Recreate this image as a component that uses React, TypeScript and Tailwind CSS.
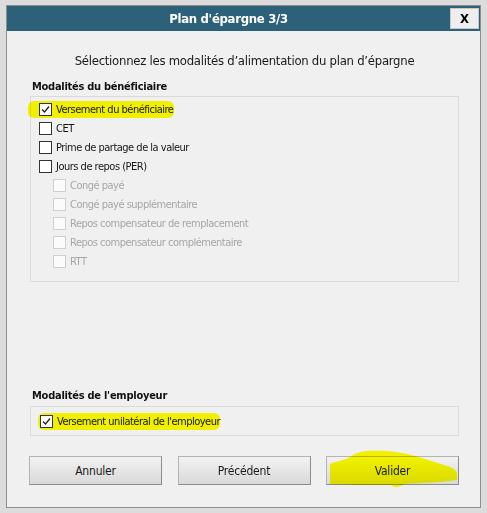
import React from 'react';

type Item = { label: string; checked?: boolean; disabled?: boolean; sub?: boolean; highlight?: boolean };

const beneficiaire: Item[] = [
  { label: 'Versement du bénéficiaire', checked: true, highlight: true },
  { label: 'CET' },
  { label: 'Prime de partage de la valeur' },
  { label: 'Jours de repos (PER)' },
  { label: 'Congé payé', disabled: true, sub: true },
  { label: 'Congé payé supplémentaire', disabled: true, sub: true },
  { label: 'Repos compensateur de remplacement', disabled: true, sub: true },
  { label: 'Repos compensateur complémentaire', disabled: true, sub: true },
  { label: 'RTT', disabled: true, sub: true },
];

const Box: React.FC<{ checked?: boolean; disabled?: boolean }> = ({ checked, disabled }) => (
  <span
    className={`relative flex h-[13px] w-[13px] shrink-0 items-center justify-center border ${
      disabled ? 'border-[#cfcfcf] bg-[#fbfbfb]' : 'border-[#333333] bg-white'
    }`}
  >
    {checked && (
      <svg width="11" height="11" viewBox="0 0 11 11" className="block">
        <path d="M2 5.5 L4.5 8 L9 2.5" fill="none" stroke="#222" strokeWidth="1.3" />
      </svg>
    )}
  </span>
);

const Row: React.FC<{ item: Item }> = ({ item }) => (
  <div className={`relative flex h-[19px] items-center gap-[4px] ${item.sub ? 'pl-[22px]' : 'pl-[8px]'}`}>
    {item.highlight && (
      <span className="pointer-events-none absolute left-[-3px] top-[1px] h-[17px] w-[146px] rounded-[6px] bg-[#ffff00] mix-blend-multiply" />
    )}
    <Box checked={item.checked} disabled={item.disabled} />
    <span className={`text-[11px] leading-none tracking-[-0.5px] ${item.disabled ? 'text-[#a6a6a6]' : 'text-[#161616]'}`}>
      {item.label}
    </span>
  </div>
);

const Btn: React.FC<{ label: string; children?: React.ReactNode }> = ({ label, children }) => (
  <div className="relative">
    <button className="flex h-[29px] w-[133px] items-center justify-center border border-[#b4b4b4] border-b-[#8c8c8c] border-r-[#8c8c8c] bg-gradient-to-b from-[#f2f2f2] to-[#d9d9d9] text-[12px] tracking-[-0.2px] text-[#1a1a1a]">
      {label}
    </button>
    {children}
  </div>
);

export default function App() {
  return (
    <div className="h-[513px] w-[487px] bg-[#dcdcdc] pl-[6px] pt-[5px] font-['DejaVu_Sans_Condensed','Liberation_Sans',sans-serif]">
      <div className="flex h-[503px] w-[475px] flex-col border border-[#8e8e8e] bg-[#f0f0f0]">
        <div className="flex h-[25px] items-center bg-[#2d6179]">
          <div className="flex-1 text-center text-[13px] font-bold tracking-[-0.3px] text-white">Plan d'épargne 3/3</div>
          <div className="mr-[1px] flex h-[21px] w-[29px] items-center justify-center border border-[#c8c8c8] bg-[#eeeeee] text-[13px] font-bold text-black">
            X
          </div>
        </div>

        <div className="flex flex-1 flex-col pl-[23px] pr-[21px]">
          <div className="mt-[22px] h-[16px] text-center text-[13px] leading-[16px] tracking-[-0.27px] text-[#1a1a1a]">
            Sélectionnez les modalités d’alimentation du plan d’épargne
          </div>

          <div className="ml-[2px] mt-[11px] h-[14px] text-[11px] font-bold leading-[14px] tracking-[-0.27px] text-[#111111]">
            Modalités du bénéficiaire
          </div>
          <div className="mt-[2px] h-[186px] border border-[#dadada] pt-[3px]">
            {beneficiaire.map((it) => (
              <Row key={it.label} item={it} />
            ))}
          </div>

          <div className="ml-[2px] mt-[107px] h-[14px] text-[11px] font-bold leading-[14px] tracking-[-0.25px] text-[#111111]">
            Modalités de l'employeur
          </div>
          <div className="mt-[3px] h-[30px] border border-[#dadada] pt-[5px]">
            <div className="relative flex h-[19px] items-center gap-[4px] pl-[9px]">
              <span className="pointer-events-none absolute left-[7px] top-[1px] h-[17px] w-[182px] rounded-[6px] bg-[#ffff00] mix-blend-multiply" />
              <Box checked />
              <span className="text-[11px] leading-none tracking-[-0.5px] text-[#161616]">Versement unilatéral de l'employeur</span>
            </div>
          </div>

          <div className="ml-[-1px] mt-[20px] flex w-[430px] justify-between">
            <Btn label="Annuler" />
            <Btn label="Précédent" />
            <Btn label="Valider">
              <svg
                className="pointer-events-none absolute left-0 top-[-8px] mix-blend-multiply"
                width="136"
                height="44"
                viewBox="0 -8 136 44"
              >
                <path
                  d="M4,8 C10,5 22,4 27,-1 C32,-5 45,-6 60,-5 C80,-4 100,3 118,9 C128,12 131,14 131,18 L131,24 C120,26 95,27 78,28 C72,32 68,32 66,29 C40,29 15,29 4,28 Z"
                  fill="#ffff00"
                />
              </svg>
            </Btn>
          </div>
        </div>
      </div>
    </div>
  );
}
